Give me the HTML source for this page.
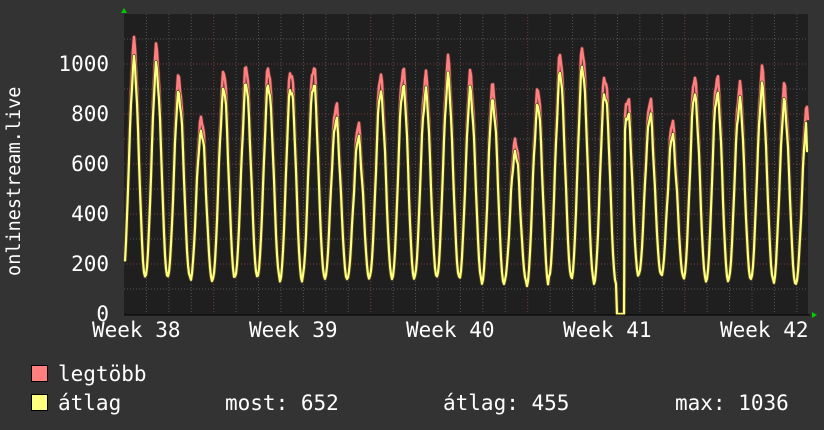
<!DOCTYPE html>
<html><head><meta charset="utf-8"><style>
body{margin:0;background:#333;width:824px;height:430px;overflow:hidden;font-family:"DejaVu Sans Mono","Liberation Mono",monospace;color:#fff}
.t{position:absolute;font-size:21px;white-space:pre;line-height:1}
.r{position:absolute;font-size:21px;line-height:1;width:80px;left:29px;text-align:right}
</style></head><body>
<svg id="g" width="824" height="430" style="position:absolute;left:0;top:0"></svg>
<div class="t" style="left:-80px;top:172px;width:190px;text-align:center;transform:rotate(-90deg);font-size:18.5px">onlinestream.live</div>
<div class="r" style="top:54px">1000</div>
<div class="r" style="top:104px">800</div>
<div class="r" style="top:154px">600</div>
<div class="r" style="top:204px">400</div>
<div class="r" style="top:254px">200</div>
<div class="r" style="top:304px">0</div>
<div class="t" style="left:92px;top:320px">Week 38</div>
<div class="t" style="left:249px;top:320px">Week 39</div>
<div class="t" style="left:406px;top:320px">Week 40</div>
<div class="t" style="left:563px;top:320px">Week 41</div>
<div class="t" style="left:720px;top:320px">Week 42</div>
<div style="position:absolute;left:31px;top:365px;width:15px;height:15px;background:#ff7f7f;border:1px solid #000"></div>
<div style="position:absolute;left:31px;top:394px;width:15px;height:15px;background:#ffff7f;border:1px solid #000"></div>
<div class="t" style="left:58px;top:364px">legtöbb</div>
<div class="t" style="left:58px;top:393px">átlag</div>
<div class="t" style="left:225px;top:393px">most: 652</div>
<div class="t" style="left:443px;top:393px">átlag: 455</div>
<div class="t" style="left:675px;top:393px">max: 1036</div>
<script>
var s='',L=124,R=808,T=14,B=314;
s+='<rect x="'+L+'" y="'+T+'" width="'+(R-L)+'" height="'+(B-T+1)+'" fill="#1f1f1f"/>';
for(var v=100;v<=1100;v+=100){var y=B-v/4;s+='<line x1="'+L+'" x2="'+R+'" y1="'+y+'" y2="'+y+'" stroke="'+(v%200?'#555':'#7a3a3a')+'" stroke-dasharray="1,2"/>';}
for(var x=124+22.4;x<R;x+=22.43){var m=Math.abs(((x-213)/157)-Math.round((x-213)/157))<0.05;s+='<line x1="'+x+'" x2="'+x+'" y1="'+T+'" y2="'+B+'" stroke="'+(m?'#7a3a3a':'#555')+'" stroke-dasharray="1,2"/>';}
var pk=[1075,1055,950,790,965,980,980,980,995,830,750,955,985,955,1005,950,915,700,895,1025,1055,955,870,850,760,945,955,915,965,900,820];
var mins=[150,150,150,130,140,150,150,130,150,140,140,150,140,150,150,140,120,130,110,150,140,120,150,160,150,140,130,140,140,120,120];
function val(x,f){var u=(x-134)/22.43;var i=Math.round(u);var t=u-i;var ii=Math.max(0,Math.min(30,i));var p=pk[ii]*f,mn=mins[ii];var w=Math.pow((1+Math.cos(2*Math.PI*t))/2,1.1);var n=Math.sin(x*1.7)*20+Math.sin(x*0.9)*14;return mn+(p-mn)*w+n*w;}
function line(f,c,w){var pts=[];for(var x=L+1;x<=R;x++){var v=val(x,f);if(x>=617&&x<=624)v=0;if(x>=807&&f<1)v=652;pts.push(x+','+Math.min(B,B-v/4).toFixed(1));}return '<polyline points="'+pts.join(' ')+'" fill="none" stroke="'+c+'" stroke-width="'+w+'" stroke-linejoin="round"/>';}
s+=line(1,'#5a3030',4)+line(1,'#ff7f7f',2.4)+line(0.93,'#4a4a20',3.5)+line(0.93,'#ffff7f',2.2);
s+='<line x1="'+L+'" x2="'+(R+2)+'" y1="'+(B+1)+'" y2="'+(B+1)+'" stroke="#000" stroke-width="1"/>';
s+='<polygon points="121,13 127,13 124,8" fill="#0c0"/><polygon points="812,312 812,318 817,315" fill="#0c0"/>';
document.getElementById('g').innerHTML=s;
</script>
</body></html>
